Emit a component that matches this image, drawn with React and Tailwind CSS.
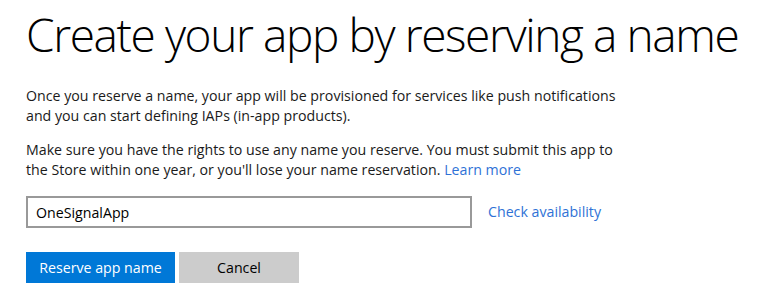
export default function App() {
  return (
    <div className="w-[773px] h-[299px] bg-white text-black font-['Segoe_UI','Open_Sans',sans-serif] px-[26px] pt-[6px]">
      <h1 className="text-[46px] font-light leading-[56px] text-black tracking-[-1.4px] whitespace-nowrap">
        Create your app by reserving a name
      </h1>
      <p className="mt-[24px] text-[14.2px] leading-[20px] text-[#1a1a1a]">
        Once you reserve a name, your app will be provisioned for services like push notifications
        <br />
        and you can start defining IAPs (in-app products).
      </p>
      <p className="mt-[14px] text-[14.2px] leading-[20px] text-[#1a1a1a]">
        Make sure you have the rights to use any name you reserve. You must submit this app to
        <br />
        the Store within one year, or you'll lose your name reservation.{' '}
        <a href="#" className="text-[#2f72d6]">Learn more</a>
      </p>
      <div className="mt-[16px] flex items-center">
        <input
          defaultValue="OneSignalApp"
          className="w-[446px] h-[32px] border-2 border-[#999] px-[8px] text-[14.2px] text-black outline-none"
        />
        <a href="#" className="ml-[16px] text-[14.2px] text-[#2f72d6]">Check availability</a>
      </div>
      <div className="mt-[24px] flex gap-[4px]">
        <button className="w-[149px] h-[31px] bg-[#0078d7] text-white text-[14.2px]">Reserve app name</button>
        <button className="w-[120px] h-[31px] bg-[#cccccc] text-black text-[14.2px]">Cancel</button>
      </div>
    </div>
  );
}
